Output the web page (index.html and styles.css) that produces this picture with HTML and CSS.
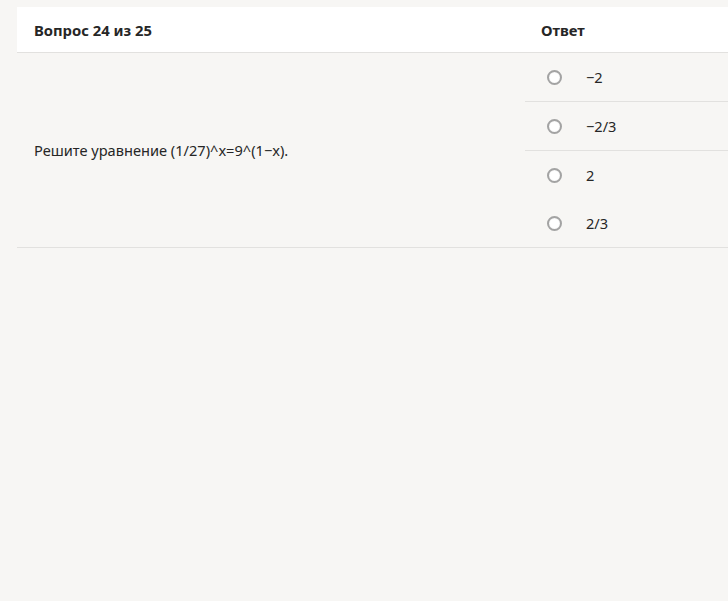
FILE: index.html
```html
<!DOCTYPE html>
<html lang="ru">
<head>
<meta charset="utf-8">
<link rel="stylesheet" href="styles.css">
</head>
<body>
<div class="page">
  <table class="quiz">
    <thead>
      <tr>
        <th class="col-q">Вопрос 24 из 25</th>
        <th class="col-a">Ответ</th>
      </tr>
    </thead>
    <tbody>
      <tr>
        <td class="question">Решите уравнение (1/27)^x=9^(1−x).</td>
        <td class="answers">
          <label class="opt sep"><span class="radio"></span><span class="val">−2</span></label>
          <label class="opt sep"><span class="radio"></span><span class="val">−2/3</span></label>
          <label class="opt"><span class="radio"></span><span class="val">2</span></label>
          <label class="opt"><span class="radio"></span><span class="val">2/3</span></label>
        </td>
      </tr>
    </tbody>
  </table>
</div>
</body>
</html>
```
FILE: styles.css
```css
html, body {
  margin: 0;
  padding: 0;
  background: #f7f6f4;
}
body {
  font-family: "Noto Sans", "Open Sans", sans-serif;
  color: #262626;
}
.page {
  padding: 7px 0 0 17px;
}
.quiz {
  width: 100%;
  border-collapse: collapse;
}
.quiz thead tr {
  background: #fff;
}
.quiz th {
  text-align: left;
  font-size: 14.8px;
  font-weight: 700;
  height: 45px;
  padding: 0 0 0 17px;
  border-bottom: 1px solid #e2e1df;
  vertical-align: middle;
}
.col-q {
  width: 491px;
}
.col-a {
  padding-left: 16px !important;
}
.quiz td {
  padding: 0;
  border-bottom: 1px solid #e2e1df;
}
.question {
  font-size: 14.6px;
  padding-left: 17px !important;
  vertical-align: middle;
}
.answers {
  vertical-align: top;
}
.opt {
  display: flex;
  align-items: center;
  height: 48px;
  padding-left: 22px;
  font-size: 14.6px;
}
.opt.sep {
  border-bottom: 1px solid #e2e1df;
}
.radio {
  box-sizing: border-box;
  width: 15px;
  height: 15px;
  border-radius: 50%;
  border: 2px solid #a3a3a3;
  background: #fff;
  box-shadow: inset 0 0 1px #ccc;
  margin-right: 24px;
}
.val {
  line-height: 1;
}
```
